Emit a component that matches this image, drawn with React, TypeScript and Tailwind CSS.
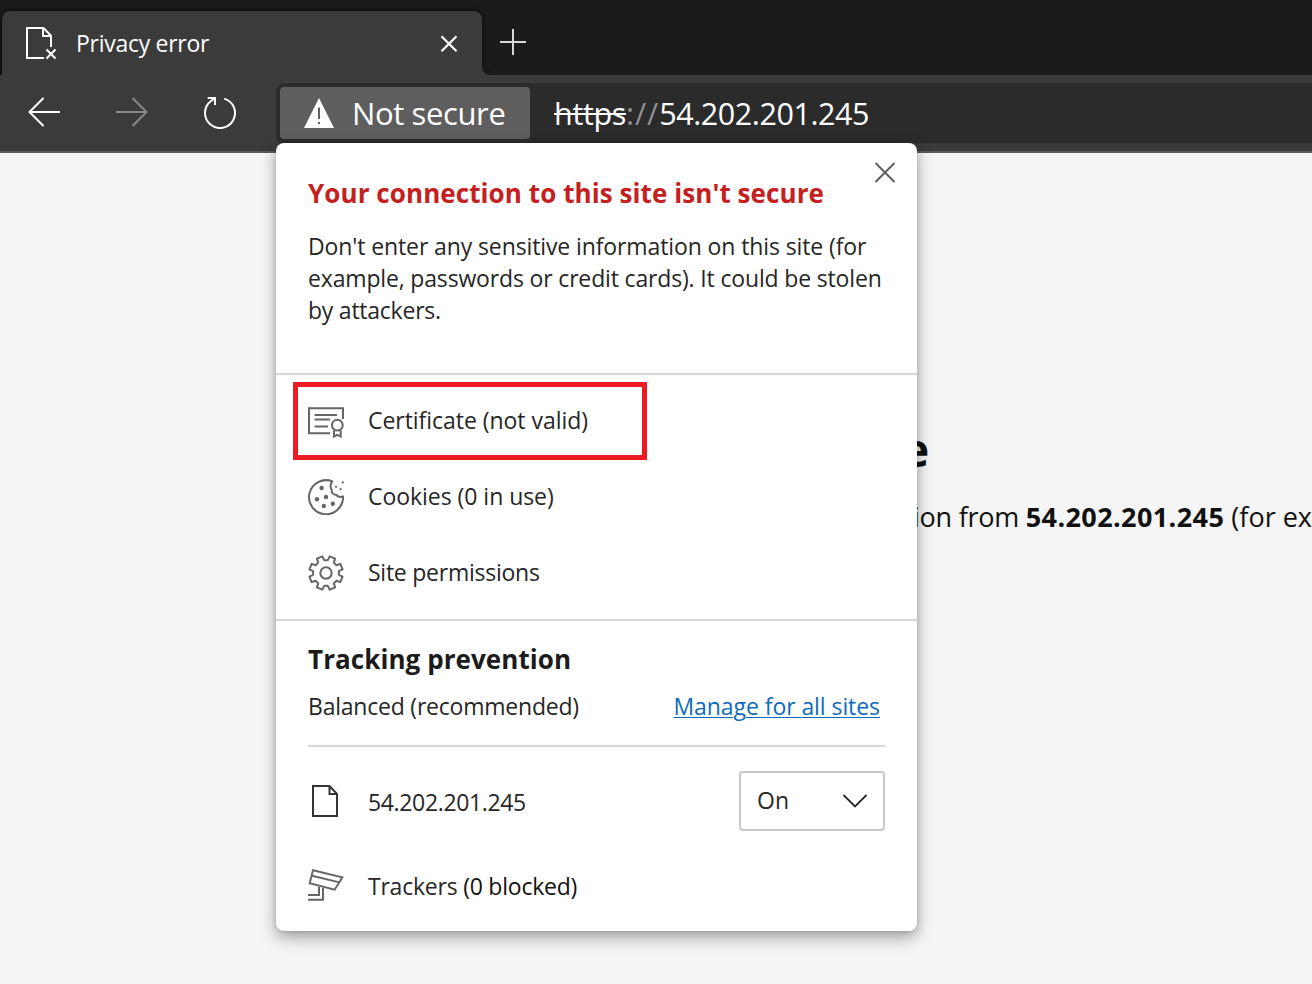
const gear = (() => {
  const p: string[] = [];
  const pt = (r: number, a: number) => {
    const t = (a * Math.PI) / 180;
    p.push(`${(26 + r * Math.sin(t)).toFixed(2)} ${(28 - r * Math.cos(t)).toFixed(2)}`);
  };
  for (let k = 0; k < 8; k++) {
    const c = 22.5 + 45 * k;
    pt(13, c - 14.5);
    pt(17, c - 10);
    pt(17, c + 10);
    pt(13, c + 14.5);
  }
  return `M${p.join("L")}Z`;
})();

function CertificateIcon() {
  return (
    <svg width="36" height="36" viewBox="8 8 36 36" fill="none" stroke="#666" strokeWidth="2">
      <path d="M30 38.3H9V13.3H43V24" />
      <path d="M14.5 20H37M14.5 24.4H30M14.5 31.6H28" />
      <circle cx="37.3" cy="30.2" r="5.4" />
      <path d="M34 35.5V41.5L37.3 39.8L40.7 41.5V35.5" />
    </svg>
  );
}

function CookieIcon() {
  return (
    <svg width="36" height="36" viewBox="8 9 36 36" fill="none" stroke="#666" strokeWidth="2">
      <path d="M32.3 11.4A17 17 0 1 0 43 26.3C40.5 27.5 38 26.8 36.4 25C33.5 24.8 31.2 22.5 31.8 20C30.2 17.5 30.3 14 32.3 11.4Z" strokeLinejoin="round" />
      <g fill="#666" stroke="none">
        <circle cx="21.6" cy="18" r="2.2" />
        <circle cx="17" cy="29.3" r="2.2" />
        <circle cx="26" cy="27" r="2.2" />
        <circle cx="23.8" cy="36" r="2.2" />
        <circle cx="32.8" cy="33.8" r="2.2" />
        <circle cx="36" cy="16.8" r="1.1" />
        <circle cx="40.6" cy="19.2" r="1.1" />
        <circle cx="42.8" cy="12.4" r="1.1" />
      </g>
    </svg>
  );
}

function GearIcon() {
  return (
    <svg width="36" height="36" viewBox="8 10 36 36" fill="none" stroke="#666" strokeWidth="2" strokeLinejoin="round">
      <path d={gear} />
      <circle cx="26" cy="28" r="5.7" />
    </svg>
  );
}

function CameraIcon() {
  return (
    <svg width="36" height="36" viewBox="8 12 36 36" fill="none" stroke="#666" strokeWidth="2">
      <path d="M13 15.3L42.3 22.4L34.7 34.7L9.7 28.3ZM12 20.8L39.5 27.4" />
      <path d="M19 32V40H8M23 33V44.8H8" />
    </svg>
  );
}

const rows = [
  {
    label: "Certificate (not valid)",
    icon: <CertificateIcon />,
    box: "flex h-[78px] w-[354px] items-center border-[5px] border-[#ed1c24] pl-[10px]",
    text: "-mt-[3px] ml-6 whitespace-nowrap leading-8 tracking-[-0.04px]",
  },
  {
    label: "Cookies (0 in use)",
    icon: <CookieIcon />,
    box: "flex h-[74px] items-center pl-[15px]",
    text: "-mt-[2px] ml-6 whitespace-nowrap leading-8 tracking-[-0.04px]",
  },
  {
    label: "Site permissions",
    icon: <GearIcon />,
    box: "flex h-[78px] items-center pl-[15px]",
    text: "-mt-[3px] ml-6 whitespace-nowrap leading-8 tracking-[-0.25px]",
  },
];

export default function App() {
  return (
    <div className="relative flex h-[984px] w-[1312px] flex-col overflow-hidden bg-[#f5f5f5] font-['Open_Sans','Noto_Sans',sans-serif] text-[23px] text-[#262626]">
      <header className="flex h-[153px] shrink-0 flex-col border-b-2 border-[#5c5c5c] bg-[#3b3b3b]">
        <div className="flex h-[75px] overflow-hidden bg-[#1b1b1b] pt-[11px]">
          <div className="w-[2px]" />
          <div className="flex h-16 w-[480px] items-center rounded-t-lg bg-[#3b3b3b] pl-[22px] pr-[23px] text-white shadow-[0_0_4px_#000]">
            <svg width="34" height="34" viewBox="24 26 34 34" fill="none" stroke="white" strokeWidth="2">
              <path d="M44 58H27V28H43.5L51 35.7V47M43 28V36H51" />
              <path d="M46.5 49.5L55.5 58.5M55.5 49.5L46.5 58.5" />
            </svg>
            <span className="-mt-px ml-[18px] whitespace-nowrap leading-8 tracking-[-0.28px]">Privacy error</span>
            <svg className="ml-auto" width="20" height="20" viewBox="0 0 20 20" stroke="white" strokeWidth="2.2">
              <path d="M2.5 3.3L17.5 18.3M17.5 3.3L2.5 18.3" />
            </svg>
          </div>
          <div className="z-10 h-2 w-2 self-end bg-[#3b3b3b]">
            <div className="h-2 w-2 rounded-bl-lg bg-[#181818]" />
          </div>
          <svg className="ml-[9px] mt-[17px]" width="28" height="28" viewBox="0 0 28 28" stroke="#d8d8d8" strokeWidth="2">
            <path d="M14 1V27M1 14H27" />
          </svg>
        </div>
        <div className="flex h-[76px] pt-2">
          <div className="flex w-[276px] shrink-0 pt-[12px]">
            <svg className="ml-[28px]" width="34" height="34" viewBox="28 95 34 34" fill="none" stroke="white" strokeWidth="2">
              <path d="M60 112H30M43.5 98L29.5 112L43.5 126" />
            </svg>
            <svg className="ml-[53px]" width="34" height="34" viewBox="115 95 34 34" fill="none" stroke="#8a8a8a" strokeWidth="2">
              <path d="M116 112H146M132.5 98L146.5 112L132.5 126" />
            </svg>
            <svg className="ml-[54px]" width="34" height="34" viewBox="203 95 34 34" fill="none" stroke="white" strokeWidth="2">
              <path d="M224.2 98.6A15 15 0 1 1 211 101L215 98M207.7 98H215V105" />
            </svg>
          </div>
          <div className="flex h-[60px] flex-1 items-center rounded-l-lg bg-[#2b2b2b] pl-1 text-white">
            <div className="flex h-[52px] w-[250px] items-center rounded bg-[#5e5e5e] pl-6">
              <svg width="30" height="30" viewBox="0 0 30 30">
                <path d="M15 0L30 30H0Z" fill="white" />
                <path d="M15 9.5V21M15 24V26" stroke="#5e5e5e" strokeWidth="2" />
              </svg>
              <span className="ml-[18px] whitespace-nowrap text-[31px] leading-10 tracking-[-0.38px]">Not secure</span>
            </div>
            <span className="ml-6 whitespace-nowrap text-[30.5px] leading-10">
              <span className="tracking-[-0.32px] line-through decoration-2">https</span>
              <span className="tracking-[0.9px] text-[#8f8f8f]">://</span>
              <span className="tracking-[-0.42px]">54.202.201.245</span>
            </span>
          </div>
        </div>
      </header>

      <main className="flex flex-1 flex-col text-[#111]">
        <h1 className="ml-[902px] mt-[264px] text-[46px] font-bold leading-[64px]">e</h1>
        <p className="ml-[913px] mt-[16px] flex whitespace-nowrap text-[27px] leading-10">
          <span className="w-[114px] tracking-[-0.25px]">ion from</span>
          <b className="w-[208px] tracking-[0.4px]">54.202.201.245</b>
          <span>(for ex</span>
        </p>
      </main>

      <section className="absolute left-[276px] top-[143px] flex h-[788px] w-[641px] flex-col rounded-lg bg-white shadow-[0_6px_16px_rgba(0,0,0,0.36),0_0_4px_rgba(0,0,0,0.15)]">
        <div className="flex h-[232px] shrink-0 flex-col border-b-2 border-[#d6d6d6] pl-8 pr-[21px]">
          <div className="flex h-[70px] justify-between">
            <h2 className="mt-[30px] whitespace-nowrap text-[26px] font-bold leading-10 tracking-[0.08px] text-[#c42020]">
              Your connection to this site isn't secure
            </h2>
            <svg className="mt-[18px]" width="22" height="22" viewBox="0 0 22 22" stroke="#5a5a5a" strokeWidth="1.8">
              <path d="M1.5 2L20.5 21M20.5 2L1.5 21" />
            </svg>
          </div>
          <p className="mt-[17px] whitespace-nowrap leading-8 tracking-[-0.11px]">
            Don't enter any sensitive information on this site (for<br />
            <span className="tracking-[-0.16px]">example, passwords or credit cards). It could be stolen</span><br />
            <span className="tracking-[-0.24px]">by attackers.</span>
          </p>
        </div>
        <div className="flex h-[246px] shrink-0 flex-col border-b-2 border-[#d6d6d6] pl-[17px] pt-[7px]">
          {rows.map((r) => (
            <div key={r.label} className={r.box}>
              {r.icon}
              <span className={r.text}>{r.label}</span>
            </div>
          ))}
        </div>
        <div className="flex flex-1 flex-col px-8">
          <h3 className="mt-[18px] text-[26px] font-bold leading-10 tracking-[0.07px] text-[#1b1b1b]">Tracking prevention</h3>
          <div className="mt-[11px] flex h-[57px] items-start justify-between border-b-2 border-[#d6d6d6] pr-[5px] leading-8">
            <span className="tracking-[-0.22px]">Balanced (recommended)</span>
            <a className="tracking-[-0.07px] text-[#0f6cbd] underline decoration-1 underline-offset-2">Manage for all sites</a>
          </div>
          <div className="mt-[24px] flex h-[60px] items-center">
            <svg width="36" height="36" viewBox="308 783 36 36" fill="none" stroke="#333" strokeWidth="2">
              <path d="M313 786H329.5L337 794V816H313ZM329.5 786V794H337" />
            </svg>
            <span className="ml-6 mt-[2px] leading-8 tracking-[-0.35px]">54.202.201.245</span>
            <div className="ml-auto flex h-[60px] w-[146px] items-center justify-between rounded border-2 border-[#c8c8c8] pl-4 pr-[15px]">
              <span className="-mt-[2px] leading-8">On</span>
              <svg width="26" height="16" viewBox="0 0 26 16" fill="none" stroke="#262626" strokeWidth="1.8">
                <path d="M1.5 2L13 13.5L24.5 2" />
              </svg>
            </div>
          </div>
          <div className="mt-[36px] flex h-9 items-center">
            <CameraIcon />
            <span className="ml-6 mt-[2px] leading-8 tracking-[-0.23px]">
              Trackers <span className="text-[#111]">(0 blocked)</span>
            </span>
          </div>
        </div>
      </section>
    </div>
  );
}
